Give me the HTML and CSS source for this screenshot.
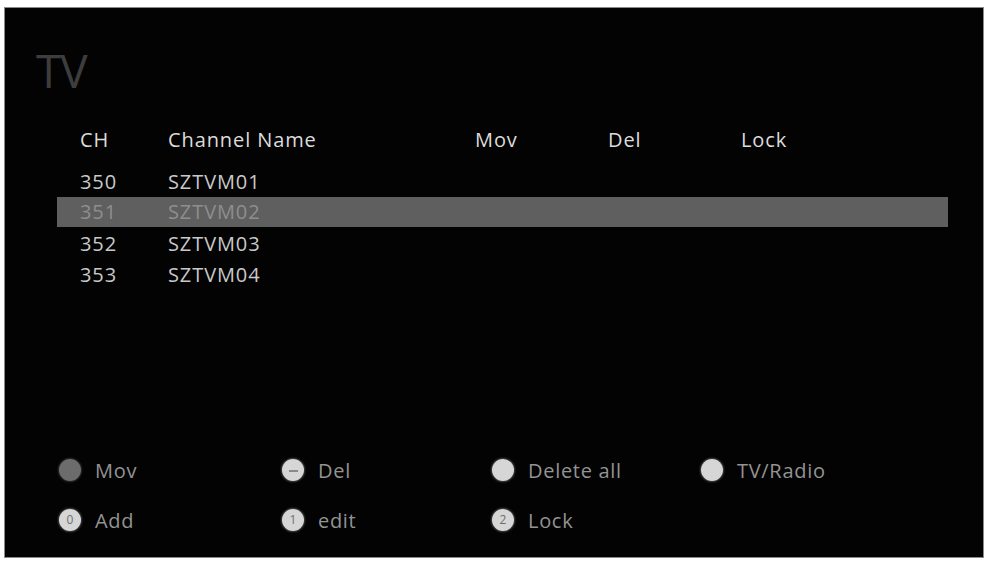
FILE: index.html
```html
<!DOCTYPE html>
<html lang="en">
<head>
<meta charset="utf-8">
<title>TV Channel Edit</title>
<link rel="stylesheet" href="styles.css">
</head>
<body>
<div class="screen">
  <h1 class="title">TV</h1>
  <div class="table">
    <div class="row head">
      <span class="c-ch">CH</span>
      <span class="c-name">Channel Name</span>
      <span class="c-mov">Mov</span>
      <span class="c-del">Del</span>
      <span class="c-lock">Lock</span>
    </div>
    <div class="row"><span class="c-ch">350</span><span class="c-name">SZTVM01</span></div>
    <div class="row selected"><span class="c-ch">351</span><span class="c-name">SZTVM02</span></div>
    <div class="row"><span class="c-ch">352</span><span class="c-name">SZTVM03</span></div>
    <div class="row"><span class="c-ch">353</span><span class="c-name">SZTVM04</span></div>
  </div>
  <div class="legend">
    <div class="key"><span class="dot dot-dim"></span><span class="label">Mov</span></div>
    <div class="key"><span class="dot"><span class="dash"></span></span><span class="label">Del</span></div>
    <div class="key"><span class="dot"></span><span class="label">Delete all</span></div>
    <div class="key"><span class="dot"></span><span class="label">TV/Radio</span></div>
    <div class="key"><span class="dot"><span class="num">0</span></span><span class="label">Add</span></div>
    <div class="key"><span class="dot"><span class="num">1</span></span><span class="label">edit</span></div>
    <div class="key"><span class="dot"><span class="num">2</span></span><span class="label">Lock</span></div>
  </div>
</div>
</body>
</html>
```
FILE: styles.css
```css
html, body {
  margin: 0;
  padding: 0;
  background: #ffffff;
}
body {
  width: 990px;
  height: 562px;
  overflow: hidden;
  font-family: "Open Sans", "DejaVu Sans", sans-serif;
}
.screen {
  box-sizing: border-box;
  width: 980px;
  height: 551px;
  margin: 7px 0 0 4px;
  background: #030303;
  border: 1px solid #8a8a8a;
  display: flex;
  flex-direction: column;
  padding: 39px 0 12px 0;
}
.title {
  margin: 0 0 0 31px;
  font-size: 46px;
  line-height: 46px;
  font-weight: 400;
  color: #3d3d3d;
  letter-spacing: -1px;
}
.table {
  margin: 32px 0 0 52px;
  width: 891px;
  display: flex;
  flex-direction: column;
}
.row {
  display: grid;
  grid-template-columns: 88px 307px 133px 133px 1fr;
  padding-left: 23px;
  height: 31px;
  line-height: 31px;
  font-size: 20px;
  letter-spacing: 0.9px;
  color: #c9c9c9;
  white-space: nowrap;
}
.row.head {
  height: 30px;
  line-height: 30px;
  margin-bottom: 11px;
  color: #dcdcdc;
}
.row.selected {
  background: #5f5f5f;
  color: #8e8e8e;
  height: 30px;
  line-height: 30px;
  margin-bottom: 1px;
}
.legend {
  margin-top: auto;
  padding-left: 54px;
  display: grid;
  grid-template-columns: 223px 210px 209px 1fr;
  grid-auto-rows: 50px;
}
.key {
  display: flex;
  align-items: center;
  gap: 14px;
}
.dot {
  width: 22px;
  height: 22px;
  border-radius: 50%;
  background: #d6d6d6;
  box-shadow: 0 0 2px 1px rgba(200, 200, 200, 0.35);
  display: flex;
  align-items: center;
  justify-content: center;
  flex: none;
}
.dot-dim {
  background: #6c6c6c;
  box-shadow: 0 0 2px 1px rgba(110, 110, 110, 0.4);
}
.dash {
  width: 9px;
  height: 2px;
  background: #8a8a8a;
  margin-top: 2px;
}
.num {
  font-size: 12px;
  line-height: 12px;
  color: #6e6e6e;
}
.label {
  font-size: 20px;
  letter-spacing: 0.7px;
  color: #939393;
  white-space: nowrap;
}
```
